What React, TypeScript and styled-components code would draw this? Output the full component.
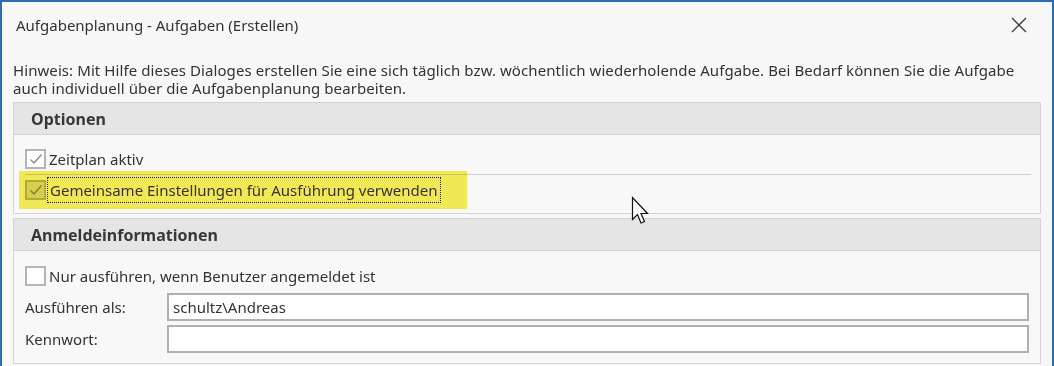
import React from "react";
import styled, { createGlobalStyle } from "styled-components";

const GlobalStyle = createGlobalStyle`
  html, body {
    margin: 0;
    padding: 0;
    background: #f7f7f7;
  }
  body {
    font-family: "Noto Sans", "Segoe UI", sans-serif;
    font-size: 15px;
    color: #333333;
  }
`;

const Window = styled.div`
  position: relative;
  box-sizing: border-box;
  width: 1054px;
  height: 366px;
  overflow: hidden;
  background: #f7f7f7;
  border-top: 2px solid #2a6db5;
  border-left: 2px solid #2a6db5;
  border-right: 2px solid #2a6db5;
`;

const TitleBar = styled.div`
  height: 46px;
  display: flex;
  align-items: center;
  justify-content: space-between;
  padding: 0 25px 2px 14px;
  font-size: 15px;
`;

const CloseButton = styled.div`
  width: 16px;
  height: 16px;
  display: flex;
  align-items: center;
  justify-content: center;
`;

const Hint = styled.div`
  margin: 11px 0 5px 11px;
  line-height: 18px;
  letter-spacing: 0.08px;
  white-space: nowrap;
`;

const Group = styled.div`
  margin: 0 11px 4px 11px;
  border: 1px solid #d4d4d4;
  background: #f8f8f8;
`;

const GroupHeader = styled.div`
  height: 31px;
  display: flex;
  align-items: center;
  padding-left: 17px;
  background: #e5e5e5;
  border-bottom: 1px solid #d4d4d4;
  font-size: 16px;
  font-weight: 700;
  color: #383838;
`;

const GroupBody = styled.div<{ $top: number; $bottom: number }>`
  display: flex;
  flex-direction: column;
  padding: ${(p) => p.$top}px 11px ${(p) => p.$bottom}px 11px;
`;

const CheckRow = styled.label`
  position: relative;
  display: flex;
  align-items: center;
  gap: 3px;
  height: 20px;
`;

const Box = styled.span<{ $shaded?: boolean }>`
  box-sizing: border-box;
  width: 21px;
  height: 20px;
  display: flex;
  align-items: center;
  justify-content: center;
  border: 2px solid #b4b4b4;
  background: ${(p) => (p.$shaded ? "#dcdcdc" : "#ffffff")};
`;

const FocusText = styled.span`
  position: relative;
  padding: 0 1px;
  outline: 1px dotted #222;
  outline-offset: 1px;
  line-height: 22px;
`;

const Marker = styled.span`
  position: absolute;
  left: -6px;
  top: -9px;
  width: 448px;
  height: 38px;
  background: #f8ef58;
  mix-blend-mode: multiply;
  pointer-events: none;
`;

const Separator = styled.div`
  height: 1px;
  background: #d0d0d0;
  margin: 5px -2px 5px 0;
`;

const FieldRow = styled.div<{ $gap: number }>`
  display: grid;
  grid-template-columns: 142px 1fr;
  align-items: center;
  margin-top: ${(p) => p.$gap}px;
`;

const Input = styled.div`
  box-sizing: border-box;
  height: 28px;
  display: flex;
  align-items: center;
  padding-left: 4px;
  background: #ffffff;
  border: 2px solid #b0b0b0;
`;

const Pointer = styled.svg`
  position: absolute;
  left: 629px;
  top: 194px;
`;

const Check = ({ color }: { color: string }) => (
  <svg width="16" height="16" viewBox="0 0 16 16">
    <path d="M2.5 8.5 L6 12 L13.5 3.5" fill="none" stroke={color} strokeWidth="1.4" />
  </svg>
);

export default function App() {
  return (
    <>
      <GlobalStyle />
      <Window>
        <TitleBar>
          <span>Aufgabenplanung - Aufgaben (Erstellen)</span>
          <CloseButton>
            <svg width="16" height="16" viewBox="0 0 16 16">
              <path d="M1 1 L15 15 M15 1 L1 15" stroke="#404040" strokeWidth="1.4" />
            </svg>
          </CloseButton>
        </TitleBar>

        <Hint>
          <div>
            Hinweis: Mit Hilfe dieses Dialoges erstellen Sie eine sich täglich bzw. wöchentlich
            wiederholende Aufgabe. Bei Bedarf können Sie die Aufgabe
          </div>
          <div>auch individuell über die Aufgabenplanung bearbeiten.</div>
        </Hint>

        <Group>
          <GroupHeader>Optionen</GroupHeader>
          <GroupBody $top={14} $bottom={13}>
            <CheckRow>
              <Box>
                <Check color="#8a8a8a" />
              </Box>
              Zeitplan aktiv
            </CheckRow>
            <Separator />
            <CheckRow>
              <Marker />
              <Box $shaded>
                <Check color="#888888" />
              </Box>
              <FocusText>Gemeinsame Einstellungen für Ausführung verwenden</FocusText>
            </CheckRow>
          </GroupBody>
        </Group>

        <Group>
          <GroupHeader>Anmeldeinformationen</GroupHeader>
          <GroupBody $top={15} $bottom={10}>
            <CheckRow>
              <Box />
              Nur ausführen, wenn Benutzer angemeldet ist
            </CheckRow>
            <FieldRow $gap={7}>
              <span>Ausführen als:</span>
              <Input>schultz\Andreas</Input>
            </FieldRow>
            <FieldRow $gap={4}>
              <span>Kennwort:</span>
              <Input />
            </FieldRow>
          </GroupBody>
        </Group>

        <Pointer width="19" height="30" viewBox="0 0 19 30">
          <path
            d="M1.5 1.5 L1.5 23.5 L6.5 18.5 L10 27 L13.5 25.5 L10 17.5 L16.5 17.5 Z"
            fill="#ffffff"
            stroke="#111111"
            strokeWidth="1.2"
            strokeLinejoin="miter"
          />
        </Pointer>
      </Window>
    </>
  );
}
